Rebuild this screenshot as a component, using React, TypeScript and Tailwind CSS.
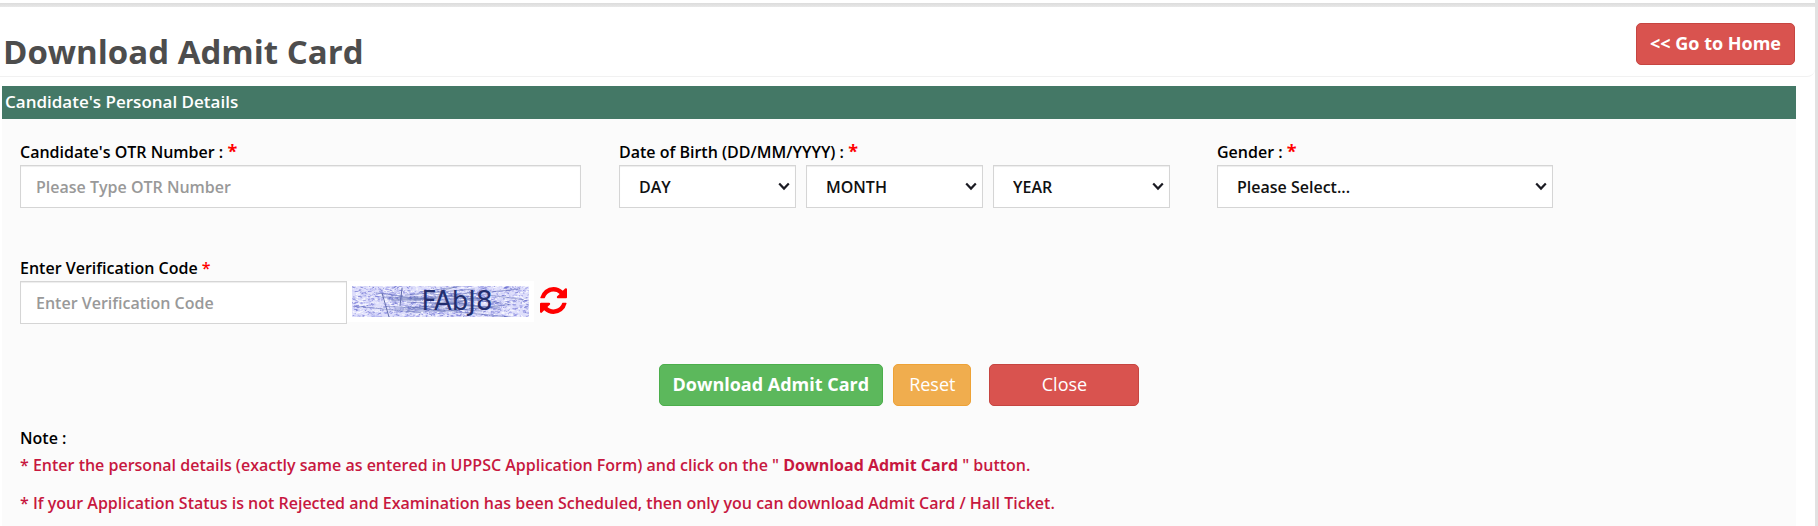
import { useState } from 'react'
import type { ReactNode } from 'react'

const CAPTCHA_W = 177
const CAPTCHA_H = 31

const MONTHS = ['JAN', 'FEB', 'MAR', 'APR', 'MAY', 'JUN', 'JUL', 'AUG', 'SEP', 'OCT', 'NOV', 'DEC']
const DAYS = Array.from({ length: 31 }, (_, i) => String(i + 1))
const YEARS = Array.from({ length: 60 }, (_, i) => String(2006 - i))

const controlClass =
  'h-[43px] border border-[#d5d5d5] bg-white text-base font-semibold shadow-[inset_0_1px_1px_rgba(0,0,0,0.075)] outline-none focus:border-sky-400'

function makeRandom(seed: number) {
  let s = seed
  return () => {
    s = (s * 16807) % 2147483647
    return s / 2147483647
  }
}

const rand = makeRandom(4821)

const SPECKLE_COLORS = ['#8484dc', '#9fa2ea', '#6f74cf', '#c9cbf8', '#ffffff', '#ffffff']
const speckles = Array.from({ length: 1900 }, () => ({
  x: rand() * CAPTCHA_W,
  y: rand() * CAPTCHA_H,
  dx: rand() * 5 - 1,
  dy: rand() * 2 - 1,
  color: SPECKLE_COLORS[Math.floor(rand() * SPECKLE_COLORS.length)],
}))

// long scratches, denser around the letters
const scratches = Array.from({ length: 36 }, (_, i) => {
  const x = i % 3 === 0 ? rand() * 120 : 45 + rand() * 75
  const y = 4 + rand() * 22
  return { x, y, x2: x + 20 + rand() * 50, y2: y + rand() * 16 - 8 }
})

function Captcha({ code }: { code: string }) {
  return (
    <svg
      className="shrink-0"
      width={CAPTCHA_W}
      height={CAPTCHA_H}
      viewBox={`0 0 ${CAPTCHA_W} ${CAPTCHA_H}`}
      role="img"
    >
      <rect width={CAPTCHA_W} height={CAPTCHA_H} fill="#dedefb" />
      {speckles.map((p, i) => (
        <line key={i} x1={p.x} y1={p.y} x2={p.x + p.dx} y2={p.y + p.dy} stroke={p.color} strokeWidth={0.8} />
      ))}
      {scratches.map((p, i) => (
        <line key={i} x1={p.x} y1={p.y} x2={p.x2} y2={p.y2} stroke="#4a5ba8" strokeWidth={0.8} opacity={0.55} />
      ))}
      <line x1={30} y1={7} x2={37} y2={31} stroke="#6570ae" strokeWidth={1} />
      <line x1={50} y1={2} x2={48} y2={20} stroke="#6570ae" strokeWidth={1} />
      <text x={105} y={24} textAnchor="middle" fill="#222e6e" fontFamily="DejaVu Sans, sans-serif" fontSize={26}>
        {code}
      </text>
    </svg>
  )
}

function RefreshIcon() {
  return (
    <svg width="27" height="27" viewBox="0 0 1536 1536" fill="currentColor" aria-hidden>
      <path d="M1511 928q0 5-1 7-64 268-268 434.5T764 1536q-146 0-282.5-55T238 1324l-129 129q-19 19-45 19t-45-19-19-45V960q0-26 19-45t45-19h448q26 0 45 19t19 45-19 45l-137 137q71 66 161 102t187 36q134 0 250-65t186-179q11-17 53-117 8-23 30-23h192q13 0 22.5 9.500t9.500 22.500zm25-800v448q0 26-19 45t-45 19h-448q-26 0-45-19t-19-45 19-45l138-138Q969 256 768 256q-134 0-250 65T332 500q-11 17-53 117-8 23-30 23H50q-13 0-22.500-9.500T18 608v-7q65-268 270-434.500T768 0q146 0 284 55.500T1297 212l130-129q19-19 45-19t45 19 19 45z" />
    </svg>
  )
}

function Label({ htmlFor, children }: { htmlFor: string; children: ReactNode }) {
  return (
    <label htmlFor={htmlFor} className="block h-6 text-base leading-[22px] font-semibold whitespace-nowrap text-black">
      {children}
    </label>
  )
}

function Star() {
  return <span className="text-lg leading-none font-bold text-[#f00]">*</span>
}

interface SelectProps {
  id?: string
  label?: string
  placeholder: string
  options: string[]
  className: string
}

function Select({ id, label, placeholder, options, className }: SelectProps) {
  return (
    <div className={`relative ${className}`}>
      <select id={id} aria-label={label} className={`${controlClass} block w-full appearance-none px-[19px] text-[#111]`}>
        <option value="">{placeholder}</option>
        {options.map(o => (
          <option key={o}>{o}</option>
        ))}
      </select>
      <svg
        className="pointer-events-none absolute top-[17px] right-[6px]"
        width="12"
        height="9"
        viewBox="0 0 12 9"
        fill="none"
        stroke="#1a1a22"
        strokeWidth="2.2"
        aria-hidden
      >
        <path d="M1.2 1.6 6 6.6 10.8 1.6" />
      </svg>
    </div>
  )
}

export default function App() {
  const [otr, setOtr] = useState('')
  const [code, setCode] = useState('')

  return (
    <div className="flex min-h-screen flex-col border-r-[3px] border-[#e2e2e2] bg-white pt-[3px] font-['Open_Sans','Noto_Sans',sans-serif]">
      <div className="h-1 shrink-0 bg-linear-to-b from-[#dcdcdc] to-[#e8e8e8]" />

      <header className="flex h-[70px] items-start justify-between rounded-br-lg border-b border-[#f1f1f1] pr-5 pl-[3px]">
        <h1 className="pt-[25px] text-[33px] leading-10 font-bold text-[#4d4d4d]">Download Admit Card</h1>
        <a
          href="#home"
          className="mt-4 flex h-[42px] rounded-[5px] border border-[#c64541] bg-[#d9534f] px-[13px] text-lg leading-[38px] font-bold text-white"
        >
          &lt;&lt; Go to Home
        </a>
      </header>

      <main className="mt-[9px] mr-[19px] ml-0.5 grow bg-[#fbfbfb]">
        <h2 className="h-[33px] bg-[#447866] px-[3px] text-[17px] leading-8 font-semibold text-white">
          Candidate's Personal Details
        </h2>

        <form onSubmit={e => e.preventDefault()}>
          <div className="grid grid-cols-3 pt-[22px]">
            <div className="pr-[19px] pl-[18px]">
              <Label htmlFor="otr">
                Candidate's OTR Number : <Star />
              </Label>
              <input
                id="otr"
                value={otr}
                onChange={e => setOtr(e.target.value)}
                placeholder="Please Type OTR Number"
                className={`${controlClass} block w-full px-[15px] placeholder:text-[#999]`}
              />
            </div>
            <div className="pr-7 pl-[19px]">
              <Label htmlFor="day">
                Date of Birth (DD/MM/YYYY) : <Star />
              </Label>
              <div className="flex gap-2.5">
                <Select id="day" placeholder="DAY" options={DAYS} className="min-w-0 flex-1" />
                <Select label="Month" placeholder="MONTH" options={MONTHS} className="min-w-0 flex-1" />
                <Select label="Year" placeholder="YEAR" options={YEARS} className="min-w-0 flex-1" />
              </div>
            </div>
            <div className="px-[19px]">
              <Label htmlFor="gender">
                Gender : <Star />
              </Label>
              <Select
                id="gender"
                placeholder="Please Select..."
                options={['Male', 'Female', 'Transgender']}
                className="w-3/5"
              />
            </div>
          </div>

          <div className="px-[18px] pt-[49px]">
            <Label htmlFor="code">
              Enter Verification Code <span className="text-[#f00]">*</span>
            </Label>
            <div className="flex items-start">
              <input
                id="code"
                value={code}
                onChange={e => setCode(e.target.value)}
                placeholder="Enter Verification Code"
                className={`${controlClass} w-[327px] px-[15px] placeholder:text-[#999]`}
              />
              <div className="bg-white p-[5px]">
                <Captcha code="FAbJ8" />
              </div>
              <button type="button" aria-label="Refresh code" className="mt-1.5 ml-1.5 text-[#f00]">
                <RefreshIcon />
              </button>
            </div>
          </div>

          <div className="mt-10 flex h-[42px] justify-center text-lg leading-[38px] text-white">
            <button
              type="submit"
              className="flex rounded-[5px] border border-[#4cae4c] bg-[#5cb85c] px-[13px] font-bold"
            >
              Download Admit Card
            </button>
            <button type="reset" className="ml-2.5 flex rounded-[5px] border border-[#eea236] bg-[#f0ad4e] px-[15px]">
              Reset
            </button>
            <button
              type="button"
              className="ml-[18px] flex w-[150px] justify-center rounded-[5px] border border-[#c64541] bg-[#d9534f]"
            >
              Close
            </button>
          </div>
        </form>

        <div className="px-[18px] pt-5 pb-1 text-base leading-6 font-semibold text-[#c7183f]">
          <p className="text-black">Note :</p>
          <p className="pt-[3px]">
            * Enter the personal details (exactly same as entered in UPPSC Application Form) and click on the "{' '}
            <b className="font-bold">Download Admit Card</b> " button.
          </p>
          <p className="pt-3.5">
            * If your Application Status is not Rejected and Examination has been Scheduled, then only you can
            download Admit Card / Hall Ticket.
          </p>
        </div>
      </main>
    </div>
  )
}
